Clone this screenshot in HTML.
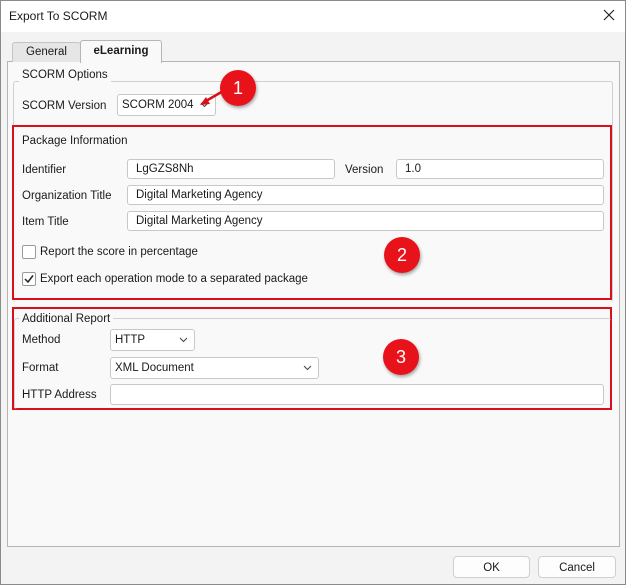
<!DOCTYPE html><html><head><style>
body{margin:0;width:626px;height:585px;background:#f0f0f0;font-family:"Liberation Sans",sans-serif;font-size:11.5px;color:#1a1a1a;position:relative;overflow:hidden}
.a{position:absolute}
.win{left:0;top:0;width:624px;height:583px;border:1px solid #8a8a8a;background:#f3f3f3}
.inp{position:absolute;height:20px;border:1px solid #c8c8c8;border-radius:3px;background:#fff;box-sizing:border-box;line-height:19px;padding-left:8px;white-space:nowrap;overflow:hidden}
.chev{position:absolute;right:6px;top:3px}
.lbl{position:absolute;line-height:14px;white-space:nowrap}
.red{position:absolute;border:2px solid #d9101a;box-sizing:border-box}
.circ{position:absolute;width:36px;height:36px;border-radius:50%;background:#e8121b;color:#fff;font-size:18px;text-align:center;line-height:36px;box-shadow:1px 2px 3px rgba(0,0,0,.35)}
.gb{position:absolute;border:1px solid #d0d0d0;border-radius:3px}
.cb{position:absolute;width:12px;height:12px;border:1px solid #9a9a9a;border-radius:2px;background:#fff}
.btn{position:absolute;height:22px;border:1px solid #cfcfcf;border-radius:4px;background:#fdfdfd;text-align:center;line-height:22px;box-sizing:border-box}
</style></head><body>
<div class="a win"></div>
<div class="a" style="left:1px;top:1px;width:624px;height:31px;background:#fff"></div>
<div class="lbl" style="left:9px;top:9px;font-size:12px">Export To SCORM</div>
<svg class="a" style="left:603px;top:9px" width="12" height="12"><path d="M1 1L11 11M11 1L1 11" stroke="#222" stroke-width="1.2"/></svg>
<div class="a" style="left:7px;top:61px;width:611px;height:484px;border:1px solid #b5b5b5;background:#f9f9f9"></div>
<div class="a" style="left:12px;top:42px;width:67px;height:19px;border:1px solid #c4c4c4;border-bottom:none;background:#e6e6e6;border-radius:3px 3px 0 0;text-align:center;line-height:19px">General</div>
<div class="a" style="left:80px;top:40px;width:80px;height:22px;border:1px solid #b5b5b5;border-bottom:none;background:#f9f9f9;border-radius:3px 3px 0 0;text-align:center;line-height:21px;font-weight:bold">eLearning</div>
<div class="gb" style="left:13px;top:81px;width:598px;height:220px;border-bottom:none"></div>
<div class="lbl" style="left:19px;top:68px;background:#f9f9f9;padding:0 3px">SCORM Options</div>
<div class="lbl" style="left:22px;top:99px">SCORM Version</div>
<div class="inp" style="left:117px;top:94px;width:99px;height:22px;line-height:21px;padding-left:4px">SCORM 2004<svg class="chev" width="9" height="14"><path d="M1 5L4.5 8.5L8 5" stroke="#444" fill="none"/></svg></div>
<div class="red" style="left:12px;top:125px;width:600px;height:175px"></div>
<div class="lbl" style="left:22px;top:134px">Package Information</div>
<div class="lbl" style="left:22px;top:163px">Identifier</div>
<div class="inp" style="left:127px;top:159px;width:208px">LgGZS8Nh</div>
<div class="lbl" style="left:345px;top:163px">Version</div>
<div class="inp" style="left:396px;top:159px;width:208px">1.0</div>
<div class="lbl" style="left:22px;top:189px">Organization Title</div>
<div class="inp" style="left:127px;top:185px;width:477px">Digital Marketing Agency</div>
<div class="lbl" style="left:22px;top:215px">Item Title</div>
<div class="inp" style="left:127px;top:211px;width:477px">Digital Marketing Agency</div>
<div class="cb" style="left:22px;top:245px"></div>
<div class="lbl" style="left:40px;top:245px">Report the score in percentage</div>
<div class="cb" style="left:22px;top:272px"><svg width="12" height="12" style="position:absolute;left:0;top:0"><path d="M2 6L5 9L10 2.5" stroke="#222" stroke-width="1.5" fill="none"/></svg></div>
<div class="lbl" style="left:40px;top:272px">Export each operation mode to a separated package</div>
<div class="red" style="left:12px;top:307px;width:600px;height:103px"></div>
<div class="gb" style="left:14px;top:318px;width:596px;height:90px;border-bottom:none;border-right:none"></div>
<div class="lbl" style="left:19px;top:312px;background:#f9f9f9;padding:0 3px">Additional Report</div>
<div class="lbl" style="left:22px;top:333px">Method</div>
<div class="inp" style="left:110px;top:329px;width:85px;height:22px;line-height:21px;padding-left:4px">HTTP<svg class="chev" width="9" height="14"><path d="M1 5L4.5 8.5L8 5" stroke="#444" fill="none"/></svg></div>
<div class="lbl" style="left:22px;top:361px">Format</div>
<div class="inp" style="left:110px;top:357px;width:209px;height:22px;line-height:21px;padding-left:4px">XML Document<svg class="chev" width="9" height="14"><path d="M1 5L4.5 8.5L8 5" stroke="#444" fill="none"/></svg></div>
<div class="lbl" style="left:22px;top:388px">HTTP Address</div>
<div class="inp" style="left:110px;top:384px;width:494px;height:21px"></div>
<svg class="a" style="left:196px;top:84px" width="40" height="26"><path d="M34 3L10 17" stroke="#d9101a" stroke-width="2.5"/><path d="M4 21L10 13L14 20Z" fill="#d9101a"/></svg>
<div class="circ" style="left:220px;top:70px">1</div>
<div class="circ" style="left:384px;top:237px">2</div>
<div class="circ" style="left:383px;top:339px">3</div>
<div class="btn" style="left:453px;top:556px;width:77px">OK</div>
<div class="btn" style="left:538px;top:556px;width:78px">Cancel</div>
</body></html>
